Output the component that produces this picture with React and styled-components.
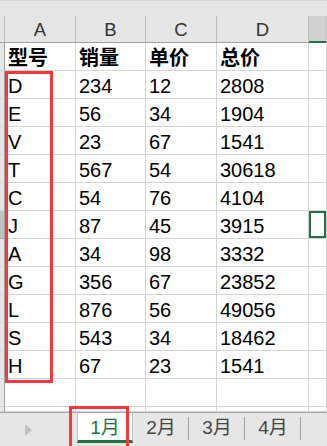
import React from 'react';
import styled, { createGlobalStyle } from 'styled-components';

const GlobalStyle = createGlobalStyle`
  html, body {
    margin: 0;
    padding: 0;
    background: #fff;
    overflow: hidden;
  }
  * {
    box-sizing: border-box;
  }
`;

const cols = '5px 71px 70px 71px 92px 18px';
const cellFont = '"Liberation Sans", "Noto Sans CJK SC", sans-serif';

const Sheet = styled.div`
  position: relative;
  width: 327px;
  height: 446px;
  display: flex;
  flex-direction: column;
  background: #fff;
  font-family: ${cellFont};
  color: #000;
  overflow: hidden;
`;

const TopStrip = styled.div`
  height: 16px;
  background: #e6e6e6;
  border-top: 1px solid #d6d6d6;
`;

const HeaderRow = styled.div`
  display: grid;
  grid-template-columns: ${cols};
  height: 27px;
  background: #e6e6e6;
  border-bottom: 1px solid #9e9e9e;
`;

const ColHead = styled.div`
  display: flex;
  align-items: center;
  justify-content: center;
  font-size: 18.5px;
  color: #333;
  padding-top: 2px;
  border-right: 1px solid #bdbdbd;
  background: ${p => (p.active ? '#d2d2d2' : 'transparent')};
  box-shadow: ${p => (p.active ? 'inset 0 -2px 0 #217346' : 'none')};
  margin-bottom: ${p => (p.active ? '-1px' : '0')};
`;

const Row = styled.div`
  display: grid;
  grid-template-columns: ${cols};
  height: ${p => p.h || 28}px;
  flex-shrink: 0;
`;

const RowHead = styled.div`
  background: ${p => (p.active ? '#b9c6bd' : '#e6e6e6')};
  border-right: 1px solid #9e9e9e;
  border-bottom: 1px solid ${p => (p.active ? '#9fb3a5' : '#d4d4d4')};
`;

const Cell = styled.div`
  display: flex;
  align-items: flex-end;
  padding: 0 0 2px 3px;
  font-size: 20px;
  line-height: 1;
  font-weight: ${p => (p.bold ? 700 : 400)};
  border-right: 1px solid #d4d4d4;
  border-bottom: 1px solid #d4d4d4;
  white-space: nowrap;
  box-shadow: ${p => (p.selected ? 'inset 0 0 0 2px #217346' : 'none')};
`;

const Frame = styled.div`
  position: absolute;
  left: ${p => p.x}px;
  top: ${p => p.y}px;
  width: ${p => p.w}px;
  height: ${p => p.h}px;
  border: 3px solid #f6383b;
  pointer-events: none;
`;

const TabBar = styled.div`
  flex: 1;
  display: flex;
  background: #e6e6e6;
  border-top: 1px solid #a6a6a6;
`;

const NavArea = styled.div`
  width: 77px;
  display: flex;
  align-items: center;
  padding-left: 25px;
`;

const Arrow = styled.div`
  width: 0;
  height: 0;
  border-top: 6px solid transparent;
  border-bottom: 6px solid transparent;
  border-left: 7px solid #bfbfbf;
  margin-top: 1px;
`;

const Tab = styled.div`
  position: relative;
  width: 56px;
  height: 30px;
  display: flex;
  align-items: center;
  justify-content: center;
  padding-bottom: 2px;
  font-size: 19px;
  color: ${p => (p.active ? '#217346' : '#444')};
  background: ${p => (p.active ? '#fff' : 'transparent')};
  border-bottom: 3px solid ${p => (p.active ? '#217346' : 'transparent')};
  border-left: ${p => (p.active ? '1px solid #c6c6c6' : 'none')};
  border-right: ${p => (p.active ? '1px solid #c6c6c6' : 'none')};

  &::after {
    content: '';
    display: ${p => (p.active ? 'none' : 'block')};
    position: absolute;
    right: 0;
    top: 4px;
    width: 1px;
    height: 23px;
    background: #9c9c9c;
  }
`;

const data = [
  ['D', 234, 12, 2808],
  ['E', 56, 34, 1904],
  ['V', 23, 67, 1541],
  ['T', 567, 54, 30618],
  ['C', 54, 76, 4104],
  ['J', 87, 45, 3915],
  ['A', 34, 98, 3332],
  ['G', 356, 67, 23852],
  ['L', 876, 56, 49056],
  ['S', 543, 34, 18462],
  ['H', 67, 23, 1541],
];

const selectedRow = 5;

export default function App() {
  return (
    <>
      <GlobalStyle />
      <Sheet>
        <TopStrip />
        <HeaderRow>
          <ColHead />
          {['A', 'B', 'C', 'D'].map(c => (
            <ColHead key={c}>{c}</ColHead>
          ))}
          <ColHead active />
        </HeaderRow>

        <Row>
          <RowHead />
          {['型号', '销量', '单价', '总价'].map(t => (
            <Cell key={t} bold>{t}</Cell>
          ))}
          <Cell />
        </Row>

        {data.map((r, i) => (
          <Row key={r[0] + i}>
            <RowHead active={i === selectedRow} />
            {r.map((v, j) => (
              <Cell key={j}>{v}</Cell>
            ))}
            <Cell selected={i === selectedRow} />
          </Row>
        ))}

        <Row>
          <RowHead />
          <Cell />
          <Cell />
          <Cell />
          <Cell />
          <Cell />
        </Row>
        <Row h={5}>
          <RowHead />
          <Cell />
          <Cell />
          <Cell />
          <Cell />
          <Cell />
        </Row>

        <TabBar>
          <NavArea>
            <Arrow />
          </NavArea>
          <Tab active>1月</Tab>
          <Tab>2月</Tab>
          <Tab>3月</Tab>
          <Tab>4月</Tab>
        </TabBar>

        <Frame x={5} y={71} w={48} h={312} />
        <Frame x={69} y={406} w={60} h={45} />
      </Sheet>
    </>
  );
}
